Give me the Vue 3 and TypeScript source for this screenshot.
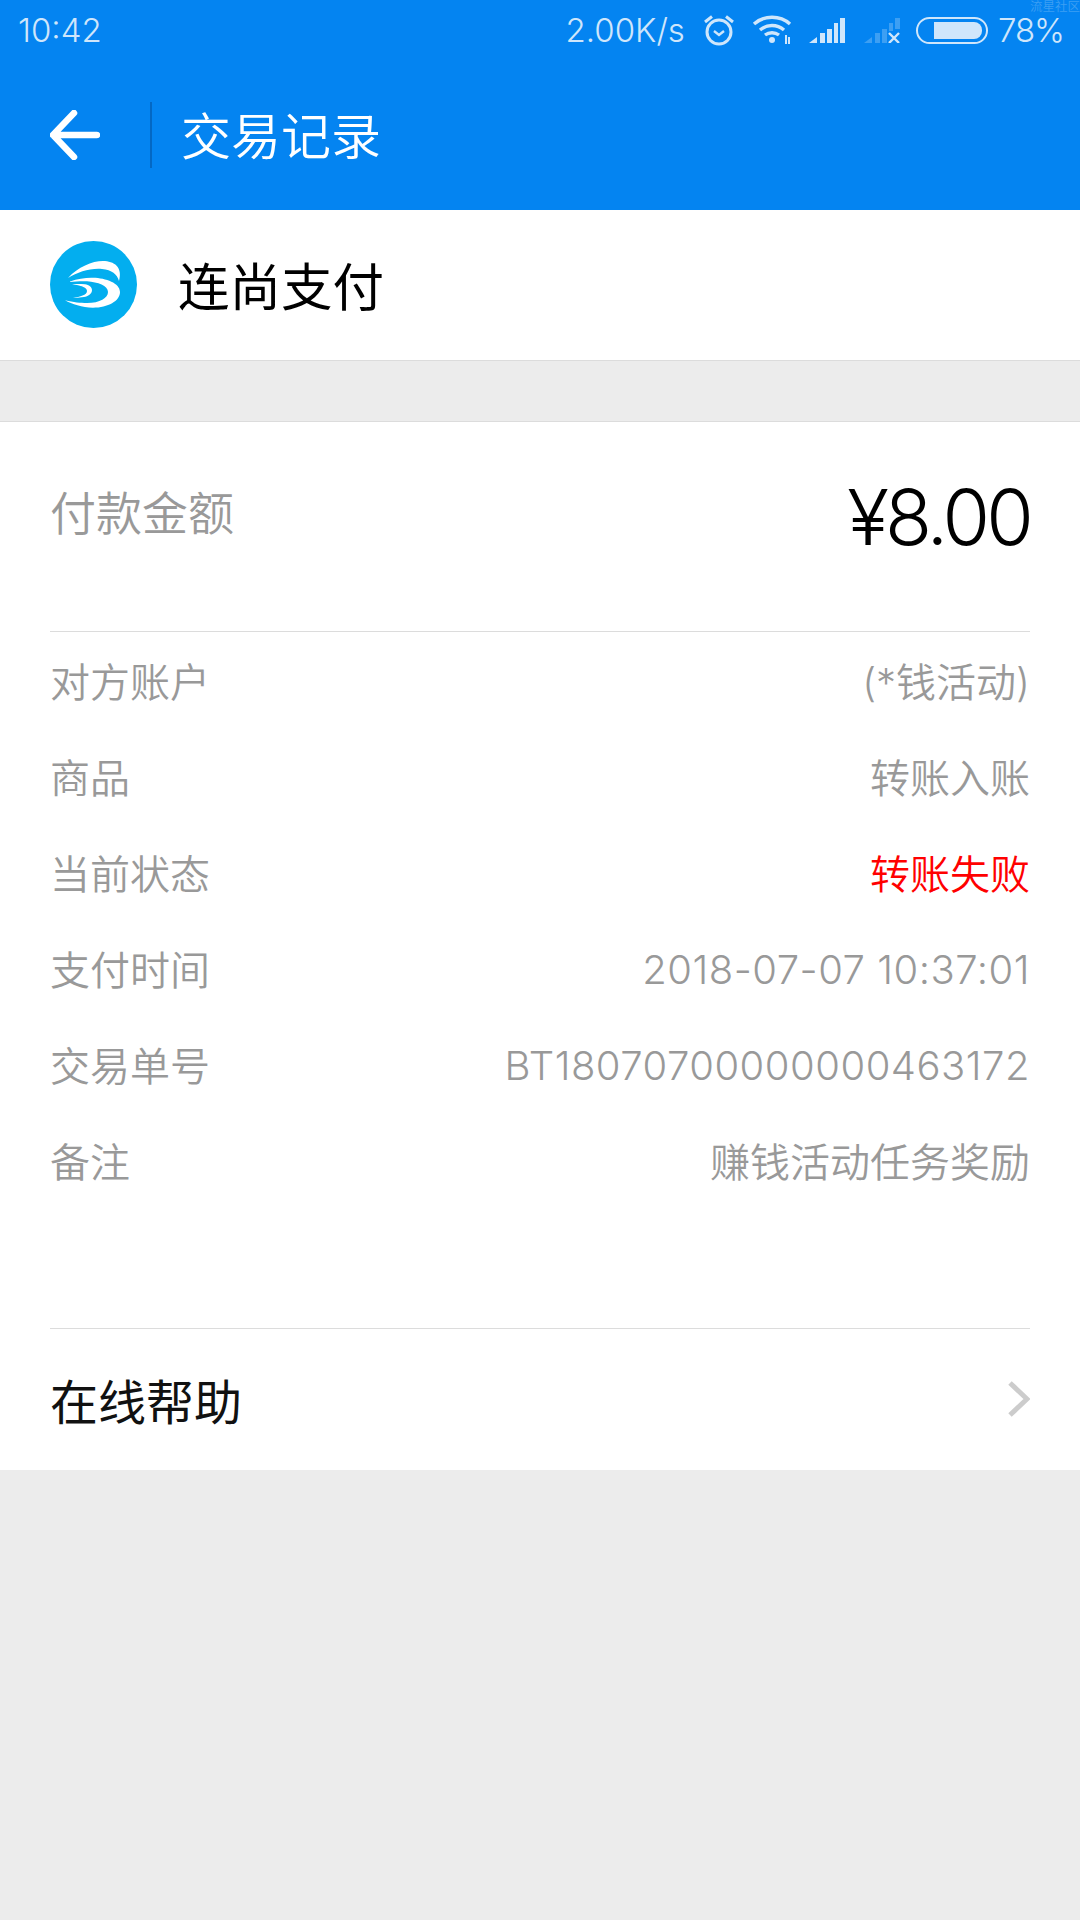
<script setup lang="ts">
interface Row {
  label: string
  value: string
  alert?: boolean
  latin?: boolean
}

const rows: Row[] = [
  { label: '对方账户', value: '(*钱活动)' },
  { label: '商品', value: '转账入账' },
  { label: '当前状态', value: '转账失败', alert: true },
  { label: '支付时间', value: '2018-07-07 10:37:01', latin: true },
  { label: '交易单号', value: 'BT18070700000000463172', latin: true },
  { label: '备注', value: '赚钱活动任务奖励' },
]
</script>

<template>
  <div class="page">
    <header class="head">
      <div class="status">
        <span class="time">10:42</span>
        <span class="watermark">流星社区</span>
        <div class="status-right">
          <span>2.00K/s</span>
          <svg class="alarm" width="32" height="32" viewBox="0 0 32 32" fill="none" stroke="#cfe6fb" stroke-width="3">
            <circle cx="16" cy="18" r="12" />
            <path d="M11 17l5 4 5-4" stroke-width="2.4" />
            <path d="M2 8l7-5.500M30 8l-7-5.500" />
          </svg>
          <svg class="wifi" width="40" height="30" viewBox="0 0 40 30" fill="none" stroke="#cfe6fb" stroke-width="3.400">
            <path d="M2 9c10-9 26-9 36 0M8 15c7-6 17-6 24 0M13 20c4-3 10-3 14 0" />
            <circle cx="20" cy="25" r="3" fill="#cfe6fb" stroke="none" />
            <path d="M34 20v9M37 22v7" stroke-width="2" />
          </svg>
          <svg class="signal" width="36" height="26" viewBox="0 0 36 26" fill="#cfe6fb">
            <path d="M0 26l8-6v6zM11 16h5v10h-5zM18 12h5v14h-5zM25 6h4v20h-4zM31 1h5v25h-5z" />
          </svg>
          <svg class="signal-off" width="36" height="26" viewBox="0 0 36 26">
            <path d="M0 26l8-6v6zM11 16h5v10h-5zM18 12h5v14h-5zM25 6h4v8h-4zM31 1h5v11h-5z" fill="#3d9ff3" />
            <path d="M25 16l10 10M35 16L25 26" stroke="#cfe6fb" stroke-width="2.400" fill="none" />
          </svg>
          <div class="battery"><div class="battery-fill"></div></div>
          <span class="percent">78%</span>
        </div>
      </div>
      <div class="bar">
        <svg class="back" width="50" height="50" viewBox="0 0 50 50" fill="none" stroke="#fff" stroke-width="6.500" stroke-linecap="round" stroke-linejoin="round">
          <path d="M47 25H3M24 3L3 25l21 22" />
        </svg>
        <div class="sep"></div>
        <h1 class="title">交易记录</h1>
      </div>
    </header>

    <section class="merchant">
      <svg class="logo" width="87" height="87" viewBox="0 0 87 87">
        <circle cx="43.500" cy="43.500" r="43.500" fill="#03aeef" />
        <path d="M18 37C28 26 42 20 53 20C64 20 73 26 69 40C67 33 62 29 52 28C40 27 28 31 18 37Z" fill="#fff" />
        <path d="M20 40.500C28 37.500 36 36.500 43 36.700C56 37 70 42 70 51C70 60 58 66.700 43 66.700C32 66.700 22 63 15 59.300C24 61.500 30 62 37 62C50 62 58 57 58 51C58 45 48 41 37 40.300C31 40 25 40.500 20 41Z" fill="#fff" />
        <path d="M22 43.300C27 42.800 31 43 35 43.300C39 44 42 46 42 49.300C42 53 38 55.500 34 56C30 56.800 26 56.800 23 56.700C30 56 37 54 37 50C37 47 33 45.500 29 44.500C26 44 24 43.500 22 43.300Z" fill="#fff" />
      </svg>
      <span class="merchant-name">连尚支付</span>
    </section>

    <div class="gap"></div>

    <section class="detail">
      <div class="amount-row">
        <span class="amount-label">付款金额</span>
        <span class="amount">¥8.00</span>
      </div>
      <div class="rows">
        <div v-for="row in rows" :key="row.label" class="row">
          <span>{{ row.label }}</span>
          <span :class="{ alert: row.alert, latin: row.latin }">{{ row.value }}</span>
        </div>
      </div>
      <div class="help">
        <span>在线帮助</span>
        <svg width="22" height="36" viewBox="0 0 22 36" fill="none" stroke="#cccccc" stroke-width="5">
          <path d="M2 2l17 16L2 34" />
        </svg>
      </div>
    </section>
  </div>
</template>

<style>
html,
body {
  margin: 0;
  background: #ececec;
}
</style>

<style scoped>
.page {
  width: 1080px;
  height: 1920px;
  background: #ececec;
  font-family: "Inter", "Noto Sans CJK SC", sans-serif;
  font-weight: 350;
}

.head {
  height: 210px;
  background: #0484f1;
}

.status {
  position: relative;
  height: 60px;
  padding: 0 16px 0 18px;
  box-sizing: border-box;
  display: flex;
  align-items: center;
  justify-content: space-between;
  color: #cfe6fb;
  font-size: 33px;
}

.watermark {
  position: absolute;
  top: 0;
  right: 0;
  font-size: 12.500px;
  line-height: 14px;
  color: #3d9ff3;
}

.status-right {
  display: flex;
  align-items: center;
}

.percent {
  letter-spacing: -1px;
}

.alarm {
  margin-left: 18px;
}

.wifi {
  margin-left: 17px;
}

.signal {
  margin-left: 17px;
}

.signal-off {
  margin-left: 19px;
}

.battery {
  width: 72px;
  height: 27px;
  margin: 0 10px 0 16px;
  box-sizing: border-box;
  border: 2px solid #cfe6fb;
  border-radius: 14px;
  padding: 3px 4px 3px 16px;
}

.battery-fill {
  height: 100%;
  background: #cfe6fb;
  border-radius: 0 8px 8px 0;
}

.bar {
  height: 150px;
  padding-left: 50px;
  display: flex;
  align-items: center;
}

.sep {
  width: 2px;
  height: 66px;
  margin: 0 29px 0 50px;
  background: #0368c4;
}

.title {
  margin: 0 0 4px;
  font-size: 50px;
  font-weight: 350;
  color: #fff;
}

.merchant {
  height: 151px;
  box-sizing: border-box;
  padding: 0 0 2px 50px;
  display: flex;
  align-items: center;
  background: #fff;
  border-bottom: 1px solid #dcdcdc;
}

.merchant-name {
  margin: 0 0 2px 41px;
  font-size: 51.500px;
  font-weight: 400;
  color: #000;
}

.gap {
  height: 60px;
}

.detail {
  height: 1049px;
  box-sizing: border-box;
  padding: 0 50px;
  background: #fff;
  border-top: 1px solid #dcdcdc;
}

.amount-row {
  height: 210px;
  box-sizing: border-box;
  padding-bottom: 20px;
  display: flex;
  align-items: center;
  justify-content: space-between;
  border-bottom: 1px solid #dcdcdc;
}

.amount-label {
  margin-bottom: 14px;
  font-size: 46px;
  color: #999;
}

.amount {
  font-size: 77px;
  letter-spacing: -3.800px;
  color: #000;
}

.rows {
  height: 697px;
  box-sizing: border-box;
  border-bottom: 1px solid #dcdcdc;
}

.row {
  height: 96px;
  display: flex;
  align-items: center;
  justify-content: space-between;
  font-size: 40px;
  color: #999;
}

.latin {
  letter-spacing: 0.500px;
  margin-top: 3px;
}

.alert {
  color: #ff0000;
}

.help {
  height: 140px;
  display: flex;
  align-items: center;
  justify-content: space-between;
  font-size: 48px;
  font-weight: 400;
  color: #111;
}
</style>
